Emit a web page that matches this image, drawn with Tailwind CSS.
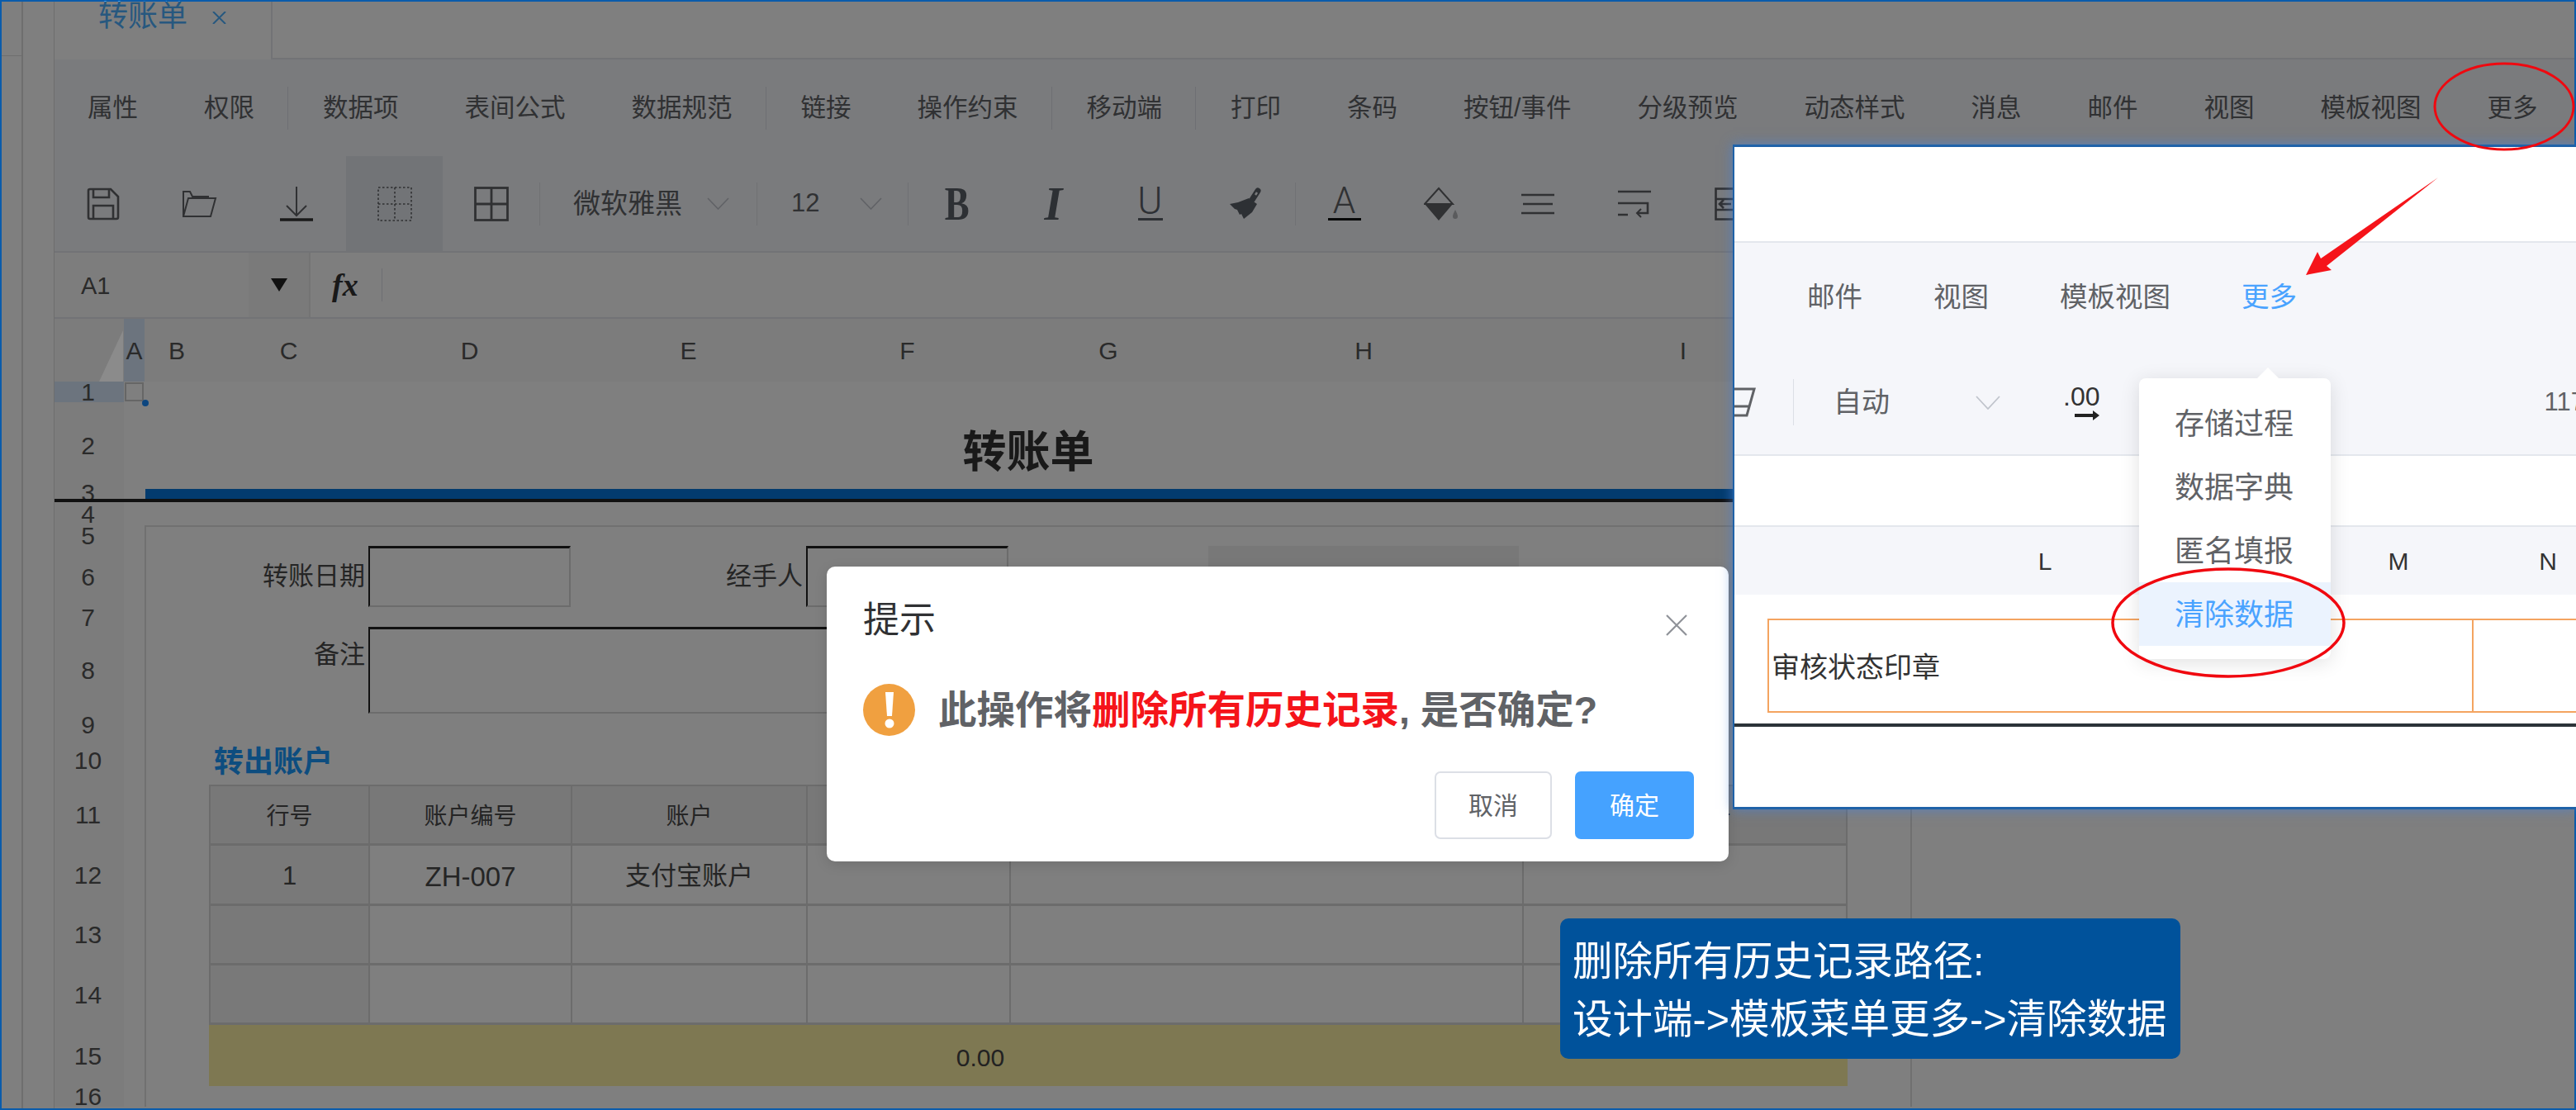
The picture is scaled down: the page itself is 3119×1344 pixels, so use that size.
<!DOCTYPE html>
<html lang="zh-CN">
<head>
    <meta charset="UTF-8">
    <title>转账单</title>
    <script src="https://cdn.jsdelivr.net/npm/@tailwindcss/browser@4"></script>
</head>
<body class="relative w-[3119px] h-[1344px] overflow-hidden bg-white font-['Liberation_Sans','Noto_Sans_CJK_SC',sans-serif]">

    <!-- Page behind the dialog -->
    <div class="flex w-full h-full border-2 border-[#0a5cab]">
        <!-- Left strips -->
        <div class="w-[26px] shrink-0 border-r-2 border-[#dcdcdc]">
            <div class="h-[66px] border-b border-[#dcdcdc]"></div>
        </div>
        <div class="w-[38px] shrink-0 border-r border-[#dcdcdc]"></div>

        <div class="flex flex-col flex-1 min-w-0">
            <!-- Tab strip -->
            <div class="flex h-[70px] border-b-2 border-[#e4e7ed]">
                <div class="flex w-[264px] h-[70px] pl-[53px] pt-[1px] border-r-2 border-[#e4e7ed] bg-white">
                    <span class="text-[36px] leading-[34px] text-[#4fb0ff]">转账单</span>
                    <svg class="ml-[30px] mt-[11px]" width="17" height="15" viewBox="0 0 17 15" fill="none" stroke="#4fb0ff" stroke-width="2"><path d="M1 0l15 15M16 0L1 15"/></svg>
                </div>
            </div>

            <!-- Menu -->
            <div class="flex items-center h-[117px] bg-[#f5f6fa] text-[30.5px] text-[#606266] whitespace-nowrap">
                <span class="px-[40px]">属性</span>
                <span class="px-[40px]">权限</span>
                <i class="w-px h-[52px] bg-[#dcdfe6] mr-[2px]"></i>
                <span class="px-[40px]">数据项</span>
                <span class="px-[40px]">表间公式</span>
                <span class="px-[40px]">数据规范</span>
                <i class="w-px h-[52px] bg-[#dcdfe6] mr-[2px]"></i>
                <span class="px-[40px]">链接</span>
                <span class="px-[40px]">操作约束</span>
                <i class="w-px h-[52px] bg-[#dcdfe6] mr-[2px]"></i>
                <span class="px-[40px]">移动端</span>
                <i class="w-px h-[52px] bg-[#dcdfe6] mr-[2px]"></i>
                <span class="px-[40px]">打印</span>
                <span class="px-[40px]">条码</span>
                <span class="px-[40px]">按钮/事件</span>
                <span class="px-[40px]">分级预览</span>
                <span class="px-[40px]">动态样式</span>
                <span class="px-[40px]">消息</span>
                <span class="px-[40px]">邮件</span>
                <span class="px-[40px]">视图</span>
                <span class="px-[40px]">模板视图</span>
                <span class="px-[40px]">更多</span>
            </div>

            <!-- Toolbar -->
            <div class="flex items-center h-[117px] bg-[#f5f6fa] border-b-2 border-[#e4e7ed] text-[#606266]">
                <div class="flex items-center justify-center w-[117px] h-full">
                    <svg width="40" height="40" viewBox="0 0 40 40" fill="none" stroke="#606266" stroke-width="2.6"><path d="M2 4a2 2 0 0 1 2-2h25l9 9v25a2 2 0 0 1-2 2H4a2 2 0 0 1-2-2z"/><path d="M8 2v10h19V2"/><path d="M8 38V22h24v16"/></svg>
                </div>
                <div class="flex items-center justify-center w-[117px] h-full">
                    <svg width="42" height="32" viewBox="0 0 42 32" fill="none" stroke="#606266" stroke-width="2"><path d="M1 31V1h8l3 6h20"/><path d="M1 31l6-22h33l-6 22z"/></svg>
                </div>
                <div class="flex items-center justify-center w-[117px] h-full">
                    <svg width="40" height="42" viewBox="0 0 40 42" fill="none" stroke="#606266" stroke-width="2"><path d="M20 0v35M8 23l12 12 12-12"/><path d="M0 40h40" stroke-width="3.5" stroke="#333"/></svg>
                </div>
                <div class="flex items-center justify-center w-[117px] h-full ml-[2px] bg-[#e4e8ef]">
                    <svg width="42" height="42" viewBox="0 0 42 42" fill="none" stroke="#606266" stroke-width="1.6" stroke-dasharray="2.5 2.5"><rect x="1" y="1" width="40" height="40"/><path d="M21 1v40M1 21h40"/></svg>
                </div>
                <div class="flex items-center justify-center w-[117px] h-full">
                    <svg width="42" height="42" viewBox="0 0 42 42" fill="none" stroke="#606266" stroke-width="2.8"><rect x="1.5" y="1.5" width="39" height="39"/><path d="M21 1v40M1 21h40"/></svg>
                </div>
                <i class="w-px h-[52px] bg-[#e0e2e8]"></i>
                <div class="flex items-center justify-between w-[262px] pl-[40px] pr-[33px] text-[33px]">
                    <span>微软雅黑</span>
                    <svg width="27" height="15" viewBox="0 0 27 15" fill="none" stroke="#c0c4cc" stroke-width="1.6"><path d="M1 1l12.5 13L26 1"/></svg>
                </div>
                <i class="w-px h-[52px] bg-[#e0e2e8]"></i>
                <div class="flex items-center justify-between w-[182px] pl-[41px] pr-[31px] text-[31px]">
                    <span>12</span>
                    <svg width="27" height="15" viewBox="0 0 27 15" fill="none" stroke="#c0c4cc" stroke-width="1.6"><path d="M1 1l12.5 13L26 1"/></svg>
                </div>
                <i class="w-px h-[52px] bg-[#e0e2e8]"></i>
                <div class="flex items-center justify-center w-[117px]"><span class="scale-x-80 text-[56px] leading-none font-bold text-[#5a6068] font-['Liberation_Serif',serif]">B</span></div>
                <div class="flex items-center justify-center w-[117px] text-[56px] leading-none font-bold italic text-[#5a6068] font-['Liberation_Serif',serif]">I</div>
                <div class="flex flex-col items-center justify-center w-[117px] text-[#5a6068]">
                    <span class="text-[46px] leading-[34px] font-light font-['Roboto',sans-serif]">U</span>
                    <i class="w-[30px] h-[3px] mt-[4px] bg-[#5a6068]"></i>
                </div>
                <div class="flex items-center justify-center w-[117px]">
                    <svg width="42" height="40" viewBox="0 0 42 40" fill="none"><path d="M27 15L34 4" stroke="#5a6068" stroke-width="7" stroke-linecap="round"/><path d="M31 9l2-3" stroke="#f5f6fa" stroke-width="2.5"/><path d="M23 13l10 7-6 10-10 8-3-6-2 1-3-6-3-1-6-6 10-2z" fill="#5a6068"/></svg>
                </div>
                <i class="w-px h-[52px] bg-[#e0e2e8]"></i>
                <div class="flex flex-col items-center justify-center w-[117px] text-[#606266]">
                    <span class="text-[44px] leading-[34px] font-light font-['Roboto',sans-serif]">A</span>
                    <i class="w-[40px] h-[3px] mt-[4px] bg-[#111]"></i>
                </div>
                <div class="flex items-center justify-center w-[117px]">
                    <svg width="42" height="42" viewBox="0 0 42 42"><path d="M18 2l17 19H1z" fill="none" stroke="#606266" stroke-width="2"/><path d="M1 21h34L18 41z" fill="#606266"/><path d="M38 28c-2 4-3 6-3 8a3 3 0 0 0 6 0c0-2-1-4-3-8z" fill="#b4b6ba"/></svg>
                </div>
                <div class="flex items-center justify-center w-[117px]">
                    <svg width="40" height="26" viewBox="0 0 40 26" fill="none" stroke="#606266" stroke-width="2.6"><path d="M0 2h40M2 13h36M0 24h40"/></svg>
                </div>
                <div class="flex items-center justify-center w-[117px]">
                    <svg width="40" height="34" viewBox="0 0 40 34" fill="none" stroke="#606266" stroke-width="2.6"><path d="M0 2h40M0 16h36v12H24M0 30h12"/><path d="M28 23l-5 5 5 5" stroke-width="2"/></svg>
                </div>
                <div class="flex items-center justify-center w-[117px]">
                    <svg width="40" height="40" viewBox="0 0 40 40" fill="none" stroke="#606266" stroke-width="2.6"><rect x="1.5" y="1.5" width="37" height="37"/><path d="M1 14h38M1 27h38M20 20h-14M11 15l-5 5 5 5"/></svg>
                </div>
            </div>

            <!-- Formula bar -->
            <div class="flex h-[80px] border-b-2 border-[#e4e7ed] bg-[#fcfcfc]">
                <div class="flex items-center w-[235px] pl-[32px] pt-[3px] text-[29px] text-[#555] bg-[#fbfbfb]">A1</div>
                <div class="flex items-center justify-center w-[75px] bg-[#f5f5f5] border-r-2 border-[#e8e8e8]">
                    <svg width="20" height="16" viewBox="0 0 20 16" fill="#222"><path d="M0 0h20L10 16z"/></svg>
                </div>
                <div class="flex items-center w-[86px] pl-[26px] text-[38px] font-bold italic text-[#333] font-['Liberation_Serif',serif]">fx</div>
                <i class="self-center w-px h-[40px] bg-[#dcdfe6]"></i>
            </div>

            <!-- Sheet -->
            <div class="grid flex-1 grid-cols-[84px_25px_78px_193px_245px_285px_245px_242px_376px_398px_78px_1fr] grid-rows-[76px_25px_105px_16px_28px_25px_74px_24px_105px_26px_60px_73px_72px_73px_73px_74px_25px] text-[30px] text-[#555]">
                <!-- Header backgrounds -->
                <div class="col-span-full row-start-1 bg-[#f8f8f8]"></div>
                <div class="col-start-1 row-start-2 row-span-16 bg-[#f8f8f8]"></div>

                <!-- Column letters -->
                <div class="flex items-center justify-center col-start-2 row-start-1 bg-[#d8e8fc]">A</div>
                <div class="flex items-center justify-center col-start-3 row-start-1">B</div>
                <div class="flex items-center justify-center col-start-4 row-start-1">C</div>
                <div class="flex items-center justify-center col-start-5 row-start-1">D</div>
                <div class="flex items-center justify-center col-start-6 row-start-1">E</div>
                <div class="flex items-center justify-center col-start-7 row-start-1">F</div>
                <div class="flex items-center justify-center col-start-8 row-start-1">G</div>
                <div class="flex items-center justify-center col-start-9 row-start-1">H</div>
                <div class="flex items-center justify-center col-start-10 row-start-1">I</div>

                <!-- Row numbers -->
                <div class="flex items-center justify-center pr-[3px] col-start-1 row-start-2 bg-[#d8e8fc]">1</div>
                <div class="flex items-center justify-center pr-[3px] col-start-1 row-start-3">2</div>
                <div class="flex items-center justify-center pr-[3px] pb-[6px] col-start-1 row-start-4 leading-[10px]">3</div>
                <div class="flex items-center justify-center pr-[3px] col-start-1 row-start-5">4</div>
                <div class="flex items-center justify-center pr-[3px] col-start-1 row-start-6">5</div>
                <div class="flex items-center justify-center pr-[3px] col-start-1 row-start-7">6</div>
                <div class="flex items-center justify-center pr-[3px] col-start-1 row-start-8">7</div>
                <div class="flex items-center justify-center pr-[3px] col-start-1 row-start-9">8</div>
                <div class="flex items-center justify-center pr-[3px] col-start-1 row-start-10">9</div>
                <div class="flex items-center justify-center pr-[3px] col-start-1 row-start-11">10</div>
                <div class="flex items-center justify-center pr-[3px] col-start-1 row-start-12">11</div>
                <div class="flex items-center justify-center pr-[3px] col-start-1 row-start-13">12</div>
                <div class="flex items-center justify-center pr-[3px] col-start-1 row-start-14">13</div>
                <div class="flex items-center justify-center pr-[3px] col-start-1 row-start-15">14</div>
                <div class="flex items-center justify-center pr-[3px] col-start-1 row-start-16">15</div>
                <div class="flex items-center justify-center pr-[3px] col-start-1 row-start-17">16</div>

                <!-- Selected cell -->
                <div class="relative col-start-2 row-start-2 m-[1px] border-2 border-[#ccc]">
                    <i class="absolute -right-[8px] -bottom-[8px] w-[8px] h-[8px] rounded-full bg-[#1a8cff]"></i>
                </div>

                <!-- Title and rule -->
                <div class="flex items-center justify-center col-start-3 col-span-9 row-start-3 pt-[16px] text-[53px] font-bold text-[#333]">转账单</div>
                <div class="flex flex-col justify-end col-span-full row-start-4">
                    <i class="h-[12px] ml-[110px] bg-[#0676dc]"></i>
                    <i class="h-[4px] bg-[#222]"></i>
                </div>

                <!-- Form frame -->
                <div class="col-start-3 col-span-9 row-start-6 row-span-12 border-l-2 border-t-2 border-r-2 border-[#e0e0e0]"></div>

                <div class="flex items-center justify-end pr-[4px] col-start-4 row-start-7 text-[31px] text-[#4a4a4a]">转账日期</div>
                <div class="col-start-5 row-start-7 border-t-[3px] border-l-2 border-t-[#222] border-l-[#222] border-b-2 border-r-2 border-b-[#d8d8d8] border-r-[#d8d8d8]"></div>
                <div class="flex items-center justify-end pr-[4px] col-start-6 row-start-7 text-[31px] text-[#4a4a4a]">经手人</div>
                <div class="col-start-7 row-start-7 border-t-[3px] border-l-2 border-t-[#222] border-l-[#222] border-b-2 border-r-2 border-b-[#d8d8d8] border-r-[#d8d8d8]"></div>
                <div class="col-start-9 row-start-7 bg-[#f0f0f0]"></div>

                <div class="flex justify-end pr-[4px] pt-[11px] col-start-4 row-start-9 text-[31px] text-[#4a4a4a]">备注</div>
                <div class="col-start-5 col-span-5 row-start-9 border-t-[3px] border-l-2 border-t-[#222] border-l-[#222] border-b-2 border-[#d8d8d8]"></div>

                <div class="flex items-center pl-[6px] pt-[5px] col-start-4 row-start-11 text-[36px] font-bold text-[#1a9aff]">转出账户</div>

                <!-- Account table -->
                <div class="grid grid-cols-[193px_245px_285px_246px_621px_1fr] grid-rows-4 col-start-4 col-span-7 row-start-12 row-span-4 border-t-2 border-l-2 border-[#d8d8d8] text-[28px] text-[#4a4a4a]">
                    <div class="flex items-center justify-center pt-[5px] bg-[#f0f0f0] border-r-2 border-b-[3px] border-[#d8d8d8]">行号</div>
                    <div class="flex items-center justify-center pt-[5px] bg-[#f0f0f0] border-r-2 border-b-[3px] border-[#d8d8d8]">账户编号</div>
                    <div class="flex items-center justify-center pt-[5px] bg-[#f0f0f0] border-r-2 border-b-[3px] border-[#d8d8d8]">账户</div>
                    <div class="flex items-center justify-center pt-[5px] bg-[#f0f0f0] border-r-2 border-b-[3px] border-[#d8d8d8]">余额</div>
                    <div class="flex items-center justify-center pt-[5px] bg-[#f0f0f0] border-r-2 border-b-[3px] border-[#d8d8d8]">开户行</div>
                    <div class="flex items-center justify-center pt-[5px] bg-[#f0f0f0] border-r-2 border-b-[3px] border-[#d8d8d8]">银行账号</div>

                    <div class="flex items-center justify-center pt-[5px] text-[31px] bg-[#f2f2f2] border-r-2 border-b-[3px] border-[#d8d8d8]">1</div>
                    <div class="flex items-center justify-center pt-[5px] text-[33px] border-r-2 border-b-[3px] border-[#d8d8d8]">ZH-007</div>
                    <div class="flex items-center justify-center pt-[5px] text-[31px] border-r-2 border-b-[3px] border-[#d8d8d8]">支付宝账户</div>
                    <div class="border-r-2 border-b-[3px] border-[#d8d8d8]"></div>
                    <div class="border-r-2 border-b-[3px] border-[#d8d8d8]"></div>
                    <div class="border-r-2 border-b-[3px] border-[#d8d8d8]"></div>

                    <div class="bg-[#f2f2f2] border-r-2 border-b-[3px] border-[#d8d8d8]"></div>
                    <div class="border-r-2 border-b-[3px] border-[#d8d8d8]"></div>
                    <div class="border-r-2 border-b-[3px] border-[#d8d8d8]"></div>
                    <div class="border-r-2 border-b-[3px] border-[#d8d8d8]"></div>
                    <div class="border-r-2 border-b-[3px] border-[#d8d8d8]"></div>
                    <div class="border-r-2 border-b-[3px] border-[#d8d8d8]"></div>

                    <div class="bg-[#f2f2f2] border-r-2 border-b-[3px] border-[#d8d8d8]"></div>
                    <div class="border-r-2 border-b-[3px] border-[#d8d8d8]"></div>
                    <div class="border-r-2 border-b-[3px] border-[#d8d8d8]"></div>
                    <div class="border-r-2 border-b-[3px] border-[#d8d8d8]"></div>
                    <div class="border-r-2 border-b-[3px] border-[#d8d8d8]"></div>
                    <div class="border-r-2 border-b-[3px] border-[#d8d8d8]"></div>
                </div>
                <div class="flex items-center justify-center pr-[116px] pt-[5px] col-start-4 col-span-7 row-start-16 bg-[#fcf0a4] text-[30px] text-[#444]">0.00</div>
            </div>
        </div>
    </div>

    <!-- Dim layer -->
    <div class="absolute inset-[2px] bg-black/50"></div>

    <!-- Corner mark of the sheet -->
    <svg class="absolute left-[120px] top-[400px]" width="29" height="62" viewBox="0 0 29 62" fill="#8b8b8b"><path d="M29 0v62H0z"/></svg>

    <!-- Dialog -->
    <div class="absolute left-[1001px] top-[686px] w-[1092px] h-[357px] rounded-[10px] bg-white shadow-[0_4px_16px_rgba(0,0,0,0.12)]">
        <div class="flex justify-between pt-[40px] pl-[44px] pr-[50px]">
            <span class="pt-[3px] text-[44px] leading-[44px] text-[#303133]">提示</span>
            <svg class="mt-[18px]" width="26" height="26" viewBox="0 0 26 26" fill="none" stroke="#909399" stroke-width="2.2"><path d="M1 1l24 24M25 1L1 25"/></svg>
        </div>
        <div class="flex items-center h-[63px] mt-[55px] pl-[44px]">
            <div class="flex items-center justify-center w-[63px] h-[63px] rounded-full bg-[#f0a040]">
                <svg width="14" height="44" viewBox="0 0 14 44" fill="#fff"><path d="M2 0h10l-2 29H4z"/><circle cx="7" cy="38" r="5.5"/></svg>
            </div>
            <p class="ml-[28px] pt-[3px] text-[46.5px] font-bold text-[#606266] whitespace-nowrap">此操作将<span class="text-[#f5141a]">删除所有历史记录</span>, 是否确定?</p>
        </div>
        <div class="flex justify-end gap-[28px] mt-[43px] pr-[42px]">
            <div class="flex items-center justify-center w-[142px] h-[82px] rounded-[7px] border-2 border-[#dcdfe6] text-[30px] text-[#606266]">取消</div>
            <div class="flex items-center justify-center w-[144px] h-[82px] rounded-[7px] bg-[#45a2ff] text-[30px] text-white">确定</div>
        </div>
    </div>

    <!-- Inset screenshot of the menu -->
    <div class="absolute left-[2098px] top-[175px] right-0 h-[805px] flex flex-col overflow-x-clip border-l-2 border-t-[3px] border-b-[3px] border-[#1f62a8] bg-white shadow-[0_0_14px_rgba(70,130,220,0.7)] text-[#606266]">
        <div class="h-[116px] shrink-0 border-b-2 border-[#e4e7ed]"></div>
        <div class="flex items-center gap-[86px] h-[130px] shrink-0 pt-[3px] pl-[88px] bg-[#f5f6fa] text-[33.5px]">
            <span>邮件</span>
            <span>视图</span>
            <span>模板视图</span>
            <span class="text-[#4aa3ff]">更多</span>
        </div>
        <div class="relative flex items-center h-[128px] shrink-0 bg-[#f5f6fa] border-b-2 border-[#e4e7ed] whitespace-nowrap">
            <svg class="shrink-0" width="26" height="36" viewBox="0 0 26 36" fill="none" stroke="#606266" stroke-width="3"><path d="M0 2h24L15 34H0M0 23h18"/></svg>
            <i class="shrink-0 ml-[45px] w-px h-[56px] bg-[#dcdfe6]"></i>
            <span class="shrink-0 ml-[48px] text-[34px]">自动</span>
            <svg class="shrink-0 ml-[104px]" width="30" height="17" viewBox="0 0 30 17" fill="none" stroke="#c0c4cc" stroke-width="1.8"><path d="M1 1l14 15L29 1"/></svg>
            <div class="flex flex-col items-end shrink-0 ml-[76px] text-[#333]">
                <span class="text-[32px] leading-[28px]">.00</span>
                <svg class="mt-[3px]" width="30" height="12" viewBox="0 0 30 12" fill="#222"><path d="M0 4h22V0l8 6-8 6V8H0z"/></svg>
            </div>
            <span class="shrink-0 ml-[538px] text-[31px]">117</span>
        </div>
        <div class="h-[86px] shrink-0 border-b-2 border-[#e4e7ed]"></div>
        <div class="flex items-center h-[82px] shrink-0 bg-[#f5f6fa] text-[30px] text-[#333]">
            <span class="w-[752px] shrink-0 text-center">L</span>
            <span class="w-[104px] shrink-0 text-center">M</span>
            <span class="w-[258px] shrink-0 text-center">N</span>
        </div>
        <div class="flex-1 min-h-0">
            <div class="flex w-[1200px] h-[114px] mt-[29px] ml-[40px] border-2 border-[#f4a460] text-[34px] text-[#333]">
                <div class="flex items-center w-[853px] pl-[3px] pt-[5px] border-r-2 border-[#f4a460]">审核状态印章</div>
            </div>
            <i class="block h-[4px] mt-[13px] bg-[#2c3338]"></i>
        </div>

        <!-- Dropdown -->
        <div class="absolute left-[490px] top-[280px] w-[232px] py-[16px] rounded-[8px] bg-white shadow-[0_4px_24px_rgba(0,0,0,0.12)] text-[36px]">
            <i class="absolute left-[143px] -top-[13px] w-0 h-0 border-x-[13px] border-b-[13px] border-x-transparent border-b-white"></i>
            <div class="flex items-center h-[77px] pt-[2px] pl-[43px]">存储过程</div>
            <div class="flex items-center h-[77px] pt-[2px] pl-[43px]">数据字典</div>
            <div class="flex items-center h-[77px] pt-[2px] pl-[43px]">匿名填报</div>
            <div class="flex items-center h-[77px] pt-[2px] pl-[43px] bg-[#ebf3fe] text-[#4aa3ff]">清除数据</div>
        </div>
    </div>

    <!-- Note -->
    <div class="absolute left-[1889px] top-[1112px] flex flex-col justify-center w-[751px] h-[170px] pl-[15px] pt-[3px] rounded-[10px] bg-[#00529b] text-[48.5px] leading-[70px] text-white whitespace-nowrap">
        <span>删除所有历史记录路径:</span>
        <span>设计端-&gt;模板菜单更多-&gt;清除数据</span>
    </div>

    <!-- Red marks -->
    <svg class="absolute left-0 top-0" width="3119" height="1344" viewBox="0 0 3119 1344" fill="none">
        <ellipse cx="3032" cy="129" rx="84" ry="52" stroke="#f0080f" stroke-width="3"/>
        <ellipse cx="2698" cy="754" rx="140" ry="65" stroke="#f0080f" stroke-width="3.5"/>
        <path d="M2952 215L2817 322 2823 327 2792 333 2806 305 2810 313z" fill="#f5141a"/>
    </svg>
</body>
</html>
